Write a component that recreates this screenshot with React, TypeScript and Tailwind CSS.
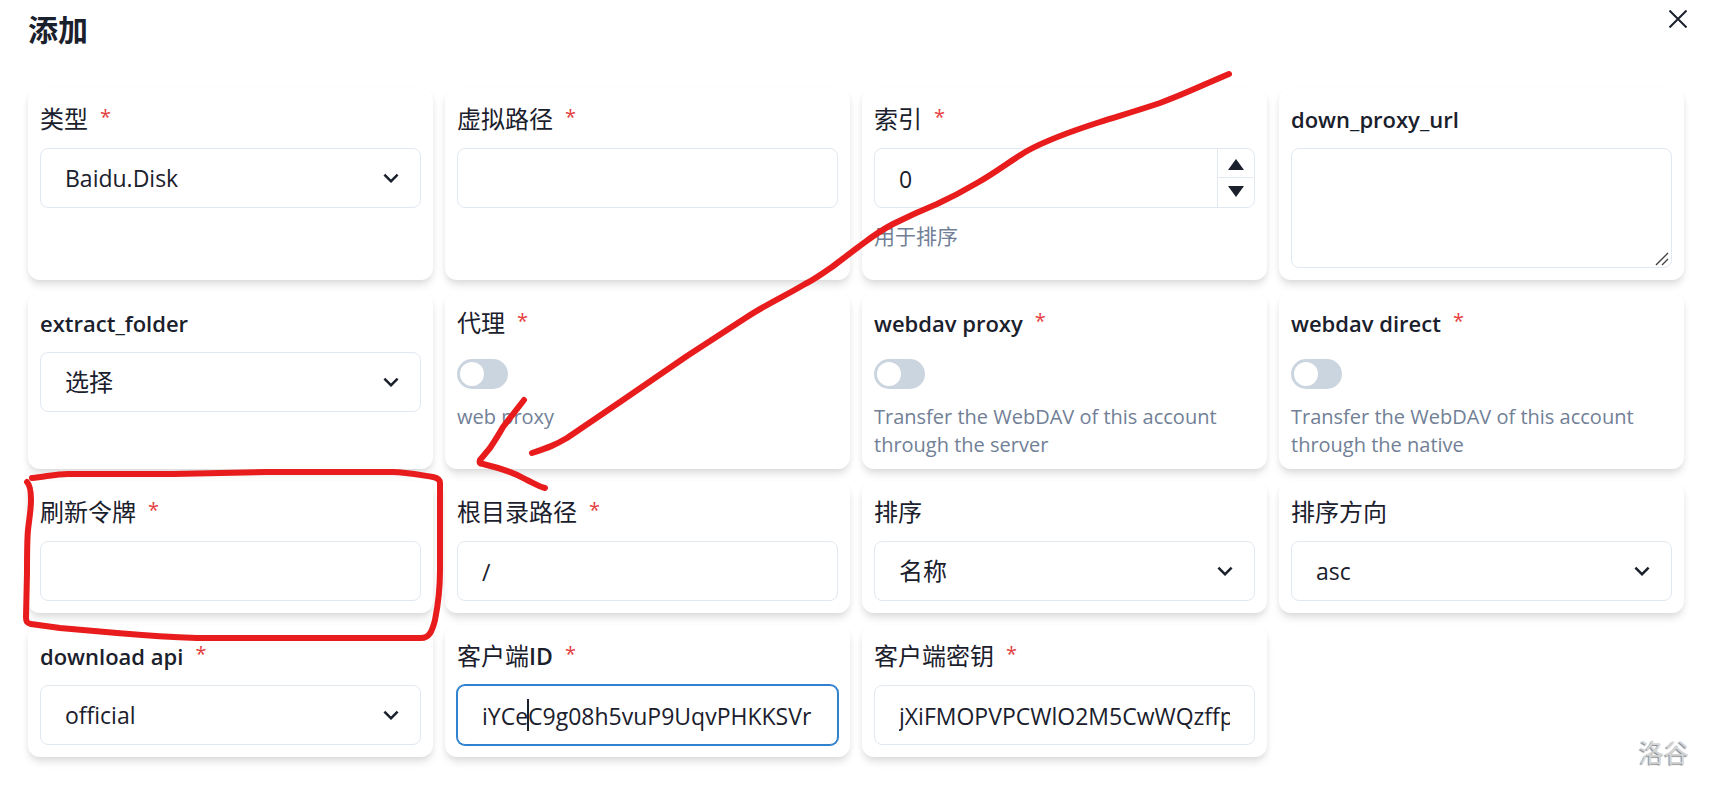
import { useState, type ReactNode } from "react";

const BOX =
  "block h-[60px] w-full rounded-lg border border-[#e2e8f0] bg-white px-6 text-[#1a202c] outline-none";
const CONTROL = `${BOX} pt-0.5 text-[23px]`;

type FieldProps = {
  id: string;
  label: ReactNode;
  latin?: boolean;
  required?: boolean;
  help?: string;
  children: ReactNode;
};

function Field({ id, label, latin, required, help, children }: FieldProps) {
  return (
    <div className="flex flex-col gap-3 rounded-xl bg-white p-3 shadow-[0_6px_9px_-1px_rgba(0,0,0,0.1),0_3px_6px_-1px_rgba(0,0,0,0.06)]">
      <label htmlFor={id} className="flex h-9 items-center gap-3 pt-0.5">
        <span className={latin ? "text-[22px] font-semibold" : "text-2xl"}>{label}</span>
        {required && (
          <span aria-hidden="true" className="pb-1 text-[20px] text-[#e53e3e]">
            *
          </span>
        )}
      </label>
      {children}
      {help && (
        <p
          className={`-mb-0.5 pt-0.5 leading-7 text-[#718096] ${latin || help === "web proxy" ? "text-[20px]" : "text-[21px]"}`}
        >
          {help}
        </p>
      )}
    </div>
  );
}

function Select({ id, options, cjk }: { id: string; options: string[]; cjk?: boolean }) {
  return (
    <div className="relative">
      <select id={id} className={`${BOX} appearance-none ${cjk ? "text-2xl" : "text-[23px]"}`}>
        {options.map((o) => (
          <option key={o}>{o}</option>
        ))}
      </select>
      <svg
        viewBox="0 0 24 24"
        className="pointer-events-none absolute top-[15px] right-[15px] size-[30px] fill-[#1a202c]"
      >
        <path d="M16.59 8.59L12 13.17 7.41 8.59 6 10l6 6 6-6z" />
      </svg>
    </div>
  );
}

function Switch({ id }: { id: string }) {
  return (
    <div className="flex h-[37px] items-end">
      <span className="relative flex h-[30px] w-[51px] rounded-full bg-[#cbd5e0] p-[3px] has-checked:justify-end has-checked:bg-[#3182ce]">
        <input
          id={id}
          type="checkbox"
          role="switch"
          className="absolute inset-0 size-full cursor-pointer appearance-none rounded-full"
        />
        <span className="pointer-events-none size-6 rounded-full bg-white" />
      </span>
    </div>
  );
}

function NumberInput({ id }: { id: string }) {
  const [value, setValue] = useState(0);
  return (
    <div className="flex h-[60px] overflow-hidden rounded-lg border border-[#e2e8f0] bg-white">
      <input
        id={id}
        inputMode="numeric"
        value={value}
        onChange={(e) => setValue(Number(e.target.value) || 0)}
        className="min-w-0 flex-1 px-6 pt-0.5 text-[23px] outline-none"
      />
      <div className="mr-px flex w-9 flex-col border-l border-[#e2e8f0]">
        <button
          type="button"
          aria-label="+1"
          onClick={() => setValue(value + 1)}
          className="flex h-[29px] items-center justify-center border-b border-[#e2e8f0] pt-0.5"
        >
          <svg viewBox="0 0 16 11" className="h-[11px] w-4 fill-[#1a202c]">
            <path d="M8 0L16 11H0z" />
          </svg>
        </button>
        <button
          type="button"
          aria-label="-1"
          onClick={() => setValue(value - 1)}
          className="flex h-[27px] items-center justify-center"
        >
          <svg viewBox="0 0 16 11" className="h-[11px] w-4 fill-[#1a202c]">
            <path d="M0 0H16L8 11z" />
          </svg>
        </button>
      </div>
    </div>
  );
}

function Annotations() {
  return (
    <svg
      viewBox="0 0 1714 789"
      aria-hidden="true"
      className="pointer-events-none absolute top-0 left-0 w-full fill-none stroke-[#e81c1c]"
      strokeWidth="6"
      strokeLinecap="round"
      strokeLinejoin="round"
    >
      <path d="M1229 74C1205 84 1185 94 1160 103C1130 113 1115 117 1100 122C1075 130 1045 141 1027 151C1010 161 995 173 977 183C960 193 950 198 937 204C920 211 905 218 893 224C876 233 868 240 857 248L832 267C820 275 815 279 805 284C785 296 765 305 747 317L687 356L620 402L567 438C555 445 550 447 532 453" />
      <path d="M524 400L503 427C498 436 494 442 490 448L480 460C479 463 480 464 483 464C500 468 515 473 527 480C535 484 540 487 545 488" />
      <path d="M32 478C45 477 55 474 68 474L173 474L267 472L393 472C405 472 420 475 433 477C438 478 440 480 440 483L440 570C440 590 438 605 435 620C432 632 429 638 421 638L197 638C165 637 140 635 117 633L60 628L31 624C27 623 26 622 26 617L27 573C27 550 27 540 28 530C29 520 31 510 31 500C31 490 30 485 27 482" />
    </svg>
  );
}

export default function App() {
  return (
    <div className="relative min-h-screen bg-white pb-8 font-['Open_Sans','Noto_Sans_CJK_SC',sans-serif] text-[#1a202c]">
      <header className="flex h-[88px] items-start justify-between pr-[27px] pl-7">
        <h1 className="pt-3 text-[30px] leading-9 font-bold">添加</h1>
        <button type="button" aria-label="关闭" className="pt-[10px]">
          <svg viewBox="0 0 18 18" className="size-[18px] fill-none stroke-[#1a202c]" strokeWidth="2">
            <path d="M.5 .5L17.5 17.5M17.5 .5L.5 17.5" />
          </svg>
        </button>
      </header>

      <form className="grid grid-cols-4 gap-3 pr-[30px] pl-7">
        <Field id="type" label="类型" required>
          <Select id="type" options={["Baidu.Disk"]} />
        </Field>
        <Field id="path" label="虚拟路径" required>
          <input id="path" className={CONTROL} />
        </Field>
        <Field id="index" label="索引" required help="用于排序">
          <NumberInput id="index" />
        </Field>
        <Field id="down_proxy_url" label="down_proxy_url" latin>
          <div className="relative">
            <textarea
              id="down_proxy_url"
              className="block h-[120px] w-full resize-none rounded-lg border border-[#e2e8f0] px-6 py-3 text-[23px] outline-none"
            />
            <svg
              viewBox="0 0 14 14"
              className="pointer-events-none absolute right-[3px] bottom-[2px] size-[14px] fill-none stroke-[#444]"
              strokeWidth="1.4"
            >
              <path d="M1 13L13 1M7 13L13 7" />
            </svg>
          </div>
        </Field>

        <Field id="extract_folder" label="extract_folder" latin>
          <Select id="extract_folder" options={["选择"]} cjk />
        </Field>
        <Field id="proxy" label="代理" required help="web proxy">
          <Switch id="proxy" />
        </Field>
        <Field
          id="webdav_proxy"
          label="webdav proxy"
          latin
          required
          help="Transfer the WebDAV of this account through the server"
        >
          <Switch id="webdav_proxy" />
        </Field>
        <Field
          id="webdav_direct"
          label="webdav direct"
          latin
          required
          help="Transfer the WebDAV of this account through the native"
        >
          <Switch id="webdav_direct" />
        </Field>

        <Field id="refresh_token" label="刷新令牌" required>
          <input id="refresh_token" className={CONTROL} />
        </Field>
        <Field id="root" label="根目录路径" required>
          <input id="root" defaultValue="/" className={CONTROL} />
        </Field>
        <Field id="order_by" label="排序">
          <Select id="order_by" options={["名称"]} cjk />
        </Field>
        <Field id="order_direction" label="排序方向">
          <Select id="order_direction" options={["asc"]} />
        </Field>

        <Field id="download_api" label="download api" latin required>
          <Select id="download_api" options={["official"]} />
        </Field>
        <Field
          id="client_id"
          label={
            <>
              客户端<span className="text-[23px] font-semibold">ID</span>
            </>
          }
          required
        >
          <div className="relative">
            <input
              id="client_id"
              defaultValue="iYCeC9g08h5vuP9UqvPHKKSVrKFXGa1v"
              className="block h-[60px] w-full rounded-lg border border-[#3182ce] bg-white px-6 pt-0.5 text-[23px] shadow-[0_0_0_1px_#3182ce] outline-none"
            />
            <span className="pointer-events-none absolute top-[14px] left-[70px] h-8 w-[2px] bg-[#1a202c]" />
          </div>
        </Field>
        <Field id="client_secret" label="客户端密钥" required>
          <input
            id="client_secret"
            defaultValue="jXiFMOPVPCWlO2M5CwWQzffpNPaGTRBG"
            className={CONTROL}
          />
        </Field>
      </form>

      <Annotations />
      <span className="pointer-events-none absolute right-[25px] bottom-[18px] text-[25px] text-[#d4d4d4] [text-shadow:-1px_1px_1px_#888]">
        洛谷
      </span>
    </div>
  );
}
